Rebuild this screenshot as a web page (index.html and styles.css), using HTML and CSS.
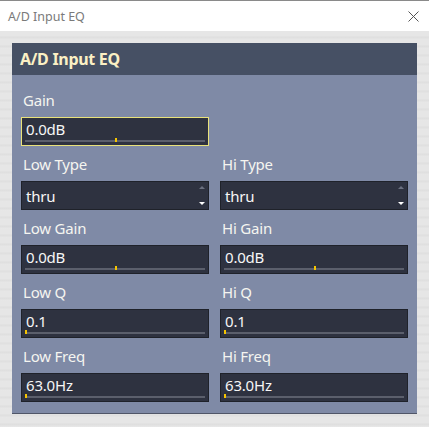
FILE: index.html
```html
<!DOCTYPE html>
<html lang="en">
<head>
    <meta charset="UTF-8">
    <meta name="viewport" content="width=device-width, initial-scale=1.0">
    <title>A/D Input EQ</title>
    <link rel="stylesheet" href="styles.css">
</head>
<body>
    <div class="titlebar">
        <span class="title">A/D Input EQ</span>
        <svg class="close" width="11" height="11" viewBox="0 0 11 11">
            <path d="M0.5 0.5 L10.5 10.5 M10.5 0.5 L0.5 10.5" stroke="#555" stroke-width="1" fill="none"/>
        </svg>
    </div>

    <div class="client">
        <div class="panel">
            <div class="panel-head">A/D Input EQ</div>
            <div class="panel-body">
                <div class="field">
                    <div class="label">Gain</div>
                    <div class="box active">
                        <span class="value">0.0dB</span>
                        <div class="track"><div class="mark" style="left: 50%"></div></div>
                    </div>
                </div>
                <div></div>

                <div class="field">
                    <div class="label">Low Type</div>
                    <div class="box select">
                        <span class="value">thru</span>
                        <span class="arrow-up"></span>
                        <span class="arrow-down"></span>
                    </div>
                </div>
                <div class="field">
                    <div class="label">Hi Type</div>
                    <div class="box select">
                        <span class="value">thru</span>
                        <span class="arrow-up"></span>
                        <span class="arrow-down"></span>
                    </div>
                </div>

                <div class="field">
                    <div class="label">Low Gain</div>
                    <div class="box">
                        <span class="value">0.0dB</span>
                        <div class="track"><div class="mark" style="left: 50%"></div></div>
                    </div>
                </div>
                <div class="field">
                    <div class="label">Hi Gain</div>
                    <div class="box">
                        <span class="value">0.0dB</span>
                        <div class="track"><div class="mark" style="left: 50%"></div></div>
                    </div>
                </div>

                <div class="field">
                    <div class="label">Low Q</div>
                    <div class="box">
                        <span class="value">0.1</span>
                        <div class="track"><div class="mark" style="left: 0"></div></div>
                    </div>
                </div>
                <div class="field">
                    <div class="label">Hi Q</div>
                    <div class="box">
                        <span class="value">0.1</span>
                        <div class="track"><div class="mark" style="left: 0"></div></div>
                    </div>
                </div>

                <div class="field">
                    <div class="label">Low Freq</div>
                    <div class="box">
                        <span class="value">63.0Hz</span>
                        <div class="track"><div class="mark" style="left: 0"></div></div>
                    </div>
                </div>
                <div class="field">
                    <div class="label">Hi Freq</div>
                    <div class="box">
                        <span class="value">63.0Hz</span>
                        <div class="track"><div class="mark" style="left: 0"></div></div>
                    </div>
                </div>
            </div>
        </div>
    </div>
</body>
</html>
```

FILE: styles.css
```css
html, body {
    margin: 0;
    padding: 0;
    height: 100%;
}

body {
    font-family: 'Noto Sans', 'Open Sans', sans-serif;
    background-color: #e4e4e4;
    overflow: hidden;
}

.titlebar {
    height: 30px;
    border-top: 1px solid #8a8a8a;
    background-color: #ffffff;
    display: flex;
    align-items: center;
    justify-content: space-between;
    padding: 0 10px 0 8px;
}

.title {
    font-size: 12.5px;
    color: #7a7a7a;
}

.close {
    margin-top: 1px;
}

.client {
    height: 396px;
    padding: 12px 12px 0 12px;
    box-sizing: border-box;
    background: repeating-linear-gradient(180deg, #e6e6e6 0px, #e6e6e6 5px, #dedede 6px, #e8e8e8 9px);
}

.panel {
    width: 405px;
}

.panel-head {
    height: 32px;
    background-color: #465064;
    color: #fbf0c4;
    font-weight: bold;
    font-size: 16px;
    letter-spacing: -0.3px;
    line-height: 32px;
    padding-left: 8px;
}

.panel-body {
    background-color: #7f8aa6;
    border-bottom: 1px solid #505668;
    padding: 16px 9px 11px 9px;
    display: grid;
    grid-template-columns: 188px 188px;
    column-gap: 11px;
    row-gap: 9px;
}

.label {
    font-size: 15px;
    letter-spacing: -0.2px;
    line-height: 18px;
    color: #f5f5f0;
    padding-left: 2px;
    margin-bottom: 8px;
}

.box {
    position: relative;
    height: 29px;
    box-sizing: border-box;
    border: 1px solid #1f222a;
    background-color: #2e3240;
}

.box.active {
    border-color: #e9e27a;
}

.value {
    display: block;
    font-size: 15px;
    letter-spacing: -0.2px;
    line-height: 23px;
    color: #f6f6f6;
    padding-left: 4px;
}

.select .value {
    line-height: 29px;
}

.track {
    position: absolute;
    left: 3px;
    right: 3px;
    top: 22px;
    height: 2px;
    background-color: #5b5f6c;
}

.mark {
    position: absolute;
    top: -2px;
    width: 2px;
    height: 4px;
    background-color: #f5c400;
}

.arrow-up {
    position: absolute;
    right: 3px;
    top: 4px;
    width: 0;
    height: 0;
    border-left: 3px solid transparent;
    border-right: 3px solid transparent;
    border-bottom: 3px solid #6b7080;
}

.arrow-down {
    position: absolute;
    right: 3px;
    bottom: 4px;
    width: 0;
    height: 0;
    border-left: 3px solid transparent;
    border-right: 3px solid transparent;
    border-top: 3px solid #ffffff;
}
```
